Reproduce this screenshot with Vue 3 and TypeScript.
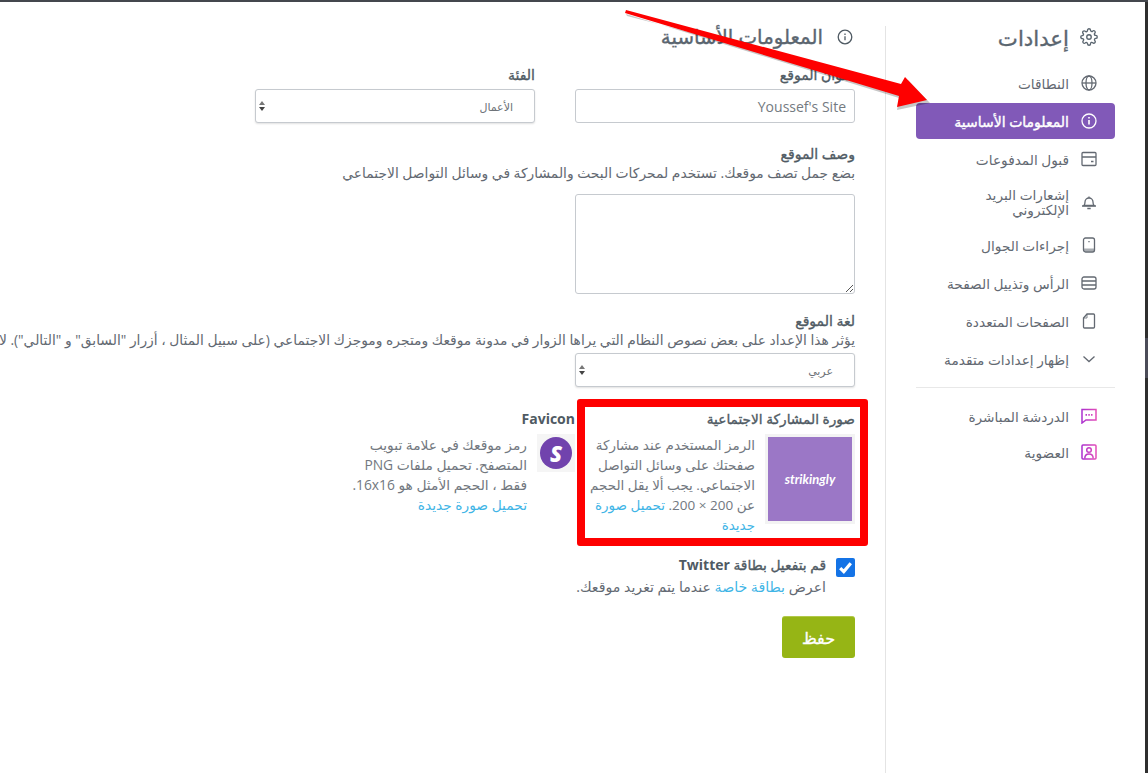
<script setup lang="ts">
interface NavItem { label: string; icon: string; active?: boolean; tall?: boolean }
const items: NavItem[] = [
  { label: 'النطاقات', icon: 'globe' },
  { label: 'المعلومات الأساسية', icon: 'info', active: true },
  { label: 'قبول المدفوعات', icon: 'card' },
  { label: 'إشعارات البريد الإلكتروني', icon: 'bell', tall: true },
  { label: 'إجراءات الجوال', icon: 'phone' },
  { label: 'الرأس وتذييل الصفحة', icon: 'rows' },
  { label: 'الصفحات المتعددة', icon: 'page' },
  { label: 'إظهار إعدادات متقدمة', icon: 'chev' },
]
const extras = [
  { label: 'الدردشة المباشرة', icon: 'chat' },
  { label: 'العضوية', icon: 'member' },
]
</script>

<template>
  <div class="page" dir="ltr">
    <main class="main" dir="rtl">
      <h2 class="title">
        <svg class="title-ico" viewBox="0 0 16 16" fill="none" stroke="currentColor" stroke-width="1.3"><circle cx="8" cy="8" r="6.8"/><path d="M8 7.2v4M8 4.4v1.5"/></svg>
        <span>المعلومات الأساسية</span>
      </h2>

      <div class="row-two">
        <div class="col">
          <label class="lbl">عنوان الموقع</label>
          <input class="input" dir="rtl" value="Youssef's Site" />
        </div>
        <div class="col">
          <label class="lbl">الفئة</label>
          <div class="select">
            <span class="sel-text">الأعمال</span>
            <span class="spin"><i class="up"></i><i class="down"></i></span>
          </div>
        </div>
      </div>

      <section class="field desc">
        <label class="lbl">وصف الموقع</label>
        <p class="hint">بضع جمل تصف موقعك. تستخدم لمحركات البحث والمشاركة في وسائل التواصل الاجتماعي</p>
        <div class="textarea"><svg class="grip" viewBox="0 0 10 10" stroke="#555" stroke-width="1"><path d="M2 9L9 2M6 9l3-3"/></svg></div>
      </section>

      <section class="field lang">
        <label class="lbl">لغة الموقع</label>
        <p class="hint nowrap">يؤثر هذا الإعداد على بعض نصوص النظام التي يراها الزوار في مدونة موقعك ومتجره وموجزك الاجتماعي (على سبيل المثال ، أزرار "السابق" و "التالي"). لا يؤثر</p>
        <div class="select lang-select">
          <span class="sel-text">عربي</span>
          <span class="spin"><i class="up"></i><i class="down"></i></span>
        </div>
      </section>

      <div class="row-images">
        <div class="social">
          <h4 class="img-title">صورة المشاركة الاجتماعية</h4>
          <div class="img-body">
            <div class="thumb"><div class="thumb-in">strikingly</div></div>
            <p class="img-text">الرمز المستخدم عند مشاركة صفحتك على وسائل التواصل الاجتماعي. يجب ألا يقل الحجم عن 200 × 200. <a class="link">تحميل صورة جديدة</a></p>
          </div>
        </div>
        <div class="favicon">
          <h4 class="img-title fav-title">Favicon</h4>
          <div class="img-body">
            <div class="fav-thumb"><div class="fav-dot">S</div></div>
            <p class="img-text fav-text">رمز موقعك في علامة تبويب المتصفح. تحميل ملفات PNG فقط ، الحجم الأمثل هو 16x16.<br /><a class="link">تحميل صورة جديدة</a></p>
          </div>
        </div>
      </div>

      <div class="twitter">
        <span class="check"><svg viewBox="0 0 18 18" fill="none" stroke="#fff" stroke-width="3"><path d="M4 9.500l3.400 3.400L14 5"/></svg></span>
        <div>
          <div class="tw-title">قم بتفعيل بطاقة <span class="tw-latin">Twitter</span></div>
          <div class="tw-text">اعرض <a class="link">بطاقة خاصة</a> عندما يتم تغريد موقعك.</div>
        </div>
      </div>

      <button class="save" type="button">حفظ</button>
    </main>

    <aside class="side" dir="rtl">
      <h1 class="side-title">
        <svg class="side-ico" viewBox="0 0 24 24" fill="none" stroke="currentColor" stroke-width="1.8" stroke-linejoin="round"><circle cx="12" cy="12" r="3"/><path d="M19.4 15a1.65 1.65 0 0 0 .33 1.82l.06.06a2 2 0 1 1-2.83 2.83l-.06-.06a1.65 1.65 0 0 0-2.82 1.17V21a2 2 0 1 1-4 0v-.09a1.65 1.65 0 0 0-2.82-1.12l-.06.06a2 2 0 1 1-2.83-2.83l.06-.06a1.65 1.65 0 0 0-1.17-2.82H3a2 2 0 1 1 0-4h.09a1.65 1.65 0 0 0 1.12-2.82l-.06-.06a2 2 0 1 1 2.83-2.83l.06.06a1.65 1.65 0 0 0 1.82.33H9a1.65 1.65 0 0 0 1-1.51V3a2 2 0 1 1 4 0v.09a1.65 1.65 0 0 0 2.82 1.12l.06-.06a2 2 0 1 1 2.83 2.83l-.06.06a1.65 1.65 0 0 0 1.17 2.82H21a2 2 0 1 1 0 4h-.09a1.65 1.65 0 0 0-1.51 1z"/></svg>
        <span>إعدادات</span>
      </h1>

      <nav class="nav nav-main">
        <a v-for="it in items" :key="it.label" class="nav-item" :class="{ active: it.active, tall: it.tall }">
          <svg class="nav-ico" viewBox="0 0 16 16" fill="none" stroke="currentColor" stroke-width="1.3">
            <template v-if="it.icon === 'globe'"><circle cx="8" cy="8" r="7"/><ellipse cx="8" cy="8" rx="3" ry="7"/><path d="M1 8h14"/></template>
            <template v-else-if="it.icon === 'info'"><circle cx="8" cy="8" r="7"/><path d="M8 7v4.400M8 3.900v1.600" stroke-width="1.600"/></template>
            <template v-else-if="it.icon === 'card'"><rect x="1" y="1.500" width="14" height="13" rx="1"/><path d="M1 6h14M10 10.500h2.500"/></template>
            <template v-else-if="it.icon === 'bell'"><path d="M3 11.500c.8-1 1-2 1-3.500a4 4 0 0 1 8 0c0 1.500.2 2.500 1 3.500z"/><path d="M1 12h14M6.300 14.500h3.400M8 2.500v1.500"/></template>
            <template v-else-if="it.icon === 'phone'"><rect x="2.500" y="1" width="11" height="14" rx="2"/><path d="M3 11.500h10v3H3z" fill="currentColor" stroke="none" opacity=".55"/><path d="M8 4v1.200"/></template>
            <template v-else-if="it.icon === 'rows'"><rect x="1" y="2" width="14" height="12" rx="2"/><path d="M1 6h14M1 10h14"/></template>
            <template v-else-if="it.icon === 'page'"><path d="M6 1h6.500a1 1 0 0 1 1 1v12a1 1 0 0 1-1 1h-9a1 1 0 0 1-1-1V5z"/><path d="M6 1v4H2.500" stroke-width=".8"/></template>
            <template v-else-if="it.icon === 'chev'"><path d="M2.500 5.500L8 10.500l5.500-5"/></template>
          </svg>
          <span class="nav-label">{{ it.label }}</span>
        </a>
      </nav>

      <div class="divider"></div>

      <nav class="nav">
        <a v-for="it in extras" :key="it.label" class="nav-item">
          <svg class="nav-ico" viewBox="0 0 16 16" fill="none" stroke="url(#pinkGrad)" stroke-width="1.500">
            <defs>
              <linearGradient id="pinkGrad" x1="0" x2="16" y1="0" y2="0" gradientUnits="userSpaceOnUse"><stop offset="0" stop-color="#a72fd0"/><stop offset="1" stop-color="#e64fb7"/></linearGradient>
            </defs>
            <template v-if="it.icon === 'chat'"><path d="M1 1.500h14v10.500H5l-4 3z"/><path d="M4.500 6.800h1.500M7.300 6.800h1.500M10 6.800h1.500" stroke-width="1.800"/></template>
            <template v-else><rect x="1" y="1" width="14" height="14" rx="1"/><circle cx="8" cy="6" r="2.300"/><path d="M3.800 14.500c0-3 1.800-4.500 4.200-4.500s4.200 1.500 4.200 4.500"/></template>
          </svg>
          <span class="nav-label">{{ it.label }}</span>
        </a>
      </nav>
    </aside>

    <div class="scrollbar"><div class="scroll-thumb"></div></div>
    <div class="redbox"></div>
    <svg class="arrow" viewBox="0 0 1148 773">
      <polygon points="626,14 899,98 897,110 930,103 908,80 903,87 627,16" fill="#000" opacity=".22"/>
      <polygon points="626,10 901,84 905,77 927,100 897,107 899,96 625,13" fill="#fe0000"/>
    </svg>
  </div>
</template>

<style>
html, body { margin: 0; background: #fff; }
</style>

<style scoped>
.page {
  position: relative;
  width: 1148px;
  height: 773px;
  box-sizing: border-box;
  overflow: hidden;
  display: flex;
  border-top: 2px solid #44474d;
  background: #fff;
  font-family: "Open Sans", "DejaVu Sans", sans-serif;
  color: #636972;
}
.main {
  width: 885px;
  flex: none;
  box-sizing: border-box;
  padding: 24px 30px 0 0;
  overflow: hidden;
}
.title {
  margin: 0 0 18px;
  padding: 0 2px;
  height: 22px;
  display: flex;
  align-items: center;
  gap: 14px;
  font-size: 19.800px;
  font-weight: 400;
  -webkit-text-stroke: .35px #5b6670;
  color: #5b6670;
  line-height: 22px;
}
.title-ico { width: 16px; height: 16px; color: #4f5a63; flex: none; }
.row-two { display: flex; gap: 40px; }
.col { width: 280px; }
.lbl {
  display: block;
  font-size: 14px;
  font-weight: 400;
  -webkit-text-stroke: .35px #4f5a63;
  line-height: 17px;
  color: #4f5a63;
  margin-bottom: 6px;
}
.input {
  display: block;
  width: 280px;
  height: 34px;
  box-sizing: border-box;
  border: 1px solid #c6cacf;
  border-radius: 3px;
  padding: 0 8px;
  font: 14px "Open Sans", sans-serif;
  color: #747a81;
  background: #fff;
  outline: none;
}
.select {
  position: relative;
  width: 280px;
  height: 34px;
  box-sizing: border-box;
  border: 1px solid #c6cacf;
  border-radius: 3px;
  box-shadow: 0 1px 2px rgba(0,0,0,.12);
  display: flex;
  align-items: center;
  justify-content: space-between;
  padding: 0 21px 0 3px;
  background: #fff;
}
.sel-text { font-size: 11px; color: #6d7278; }
.spin { display: flex; flex-direction: column; gap: 2px; }
.spin i { display: block; width: 0; height: 0; border-left: 3px solid transparent; border-right: 3px solid transparent; }
.spin .up { border-bottom: 4px solid #777; }
.spin .down { border-top: 4px solid #444; }
.field .lbl { margin-bottom: 2px; }
.desc { margin-top: 22px; }
.hint { margin: 0 0 13px; font-size: 13.850px; line-height: 17px; color: #636972; }
.nowrap { white-space: nowrap; }
.textarea {
  position: relative;
  width: 280px;
  height: 100px;
  box-sizing: border-box;
  border: 1px solid #c6cacf;
  border-radius: 3px;
}
.grip { position: absolute; right: 0; bottom: 0; width: 10px; height: 10px; }
.lang { margin-top: 18px; }
.lang .hint { margin-bottom: 5px; }
.row-images { display: flex; margin-top: 23px; }
.social { width: 280px; flex: none; }
.favicon { width: 225px; flex: none; }
.img-title {
  margin: 0 0 7px;
  font-size: 13.700px;
  line-height: 17px;
  font-weight: 400;
  -webkit-text-stroke: .35px #4f5a63;
  color: #4f5a63;
}
.fav-title { font-size: 14px; font-weight: 700; -webkit-text-stroke: 0; }
.img-body { display: flex; gap: 10px; }
.thumb { width: 90px; height: 90px; flex: none; box-sizing: border-box; padding: 3px; background: #f3f3f3; }
.thumb-in {
  width: 84px; height: 84px; background: #9b77c6; color: #fff;
  display: flex; align-items: center; justify-content: center;
  font: italic 700 13px "Lato", sans-serif; direction: ltr;
}
.img-text { margin: 0; width: 170px; padding-top: 1px; font-size: 13.500px; line-height: 20px; color: #727880; }
.link { color: #3fb5e6; }
.fav-thumb { width: 38px; height: 38px; flex: none; box-sizing: border-box; padding: 3px; background: #f5f5f5; }
.fav-dot {
  width: 32px; height: 32px; border-radius: 50%; background: #7143ad; color: #fff;
  display: flex; align-items: center; justify-content: center;
  font: italic 800 22px "Open Sans", sans-serif;
}
.fav-text { width: 178px; font-size: 13.800px; }
.twitter { display: flex; gap: 10px; margin-top: 21px; }
.check {
  width: 19px; height: 19px; flex: none; margin-top: 2px;
  background: #1473e6; border-radius: 2px; display: block;
}
.check svg { display: block; width: 19px; height: 19px; }
.tw-title { font-size: 13.800px; line-height: 18px; -webkit-text-stroke: .35px #4f5a63; color: #4f5a63; }
.tw-latin { font-size: 14px; font-weight: 700; -webkit-text-stroke: 0; }
.tw-text { font-size: 14.150px; line-height: 26px; color: #636972; }
.save {
  display: block;
  width: 73px;
  height: 42px;
  margin-top: 16px;
  border: 0;
  border-top: 1px solid #b2c94b;
  border-radius: 3px;
  background: #96b515;
  color: #fff;
  font: 400 16px "Open Sans", "DejaVu Sans", sans-serif;
  -webkit-text-stroke: .35px #fff;
}
.side {
  flex: 1;
  margin-top: 24px;
  border-left: 1px solid #e4e4e4;
  box-sizing: border-box;
  padding: 0 33px 0 30px;
}
.side-title {
  margin: 0 0 17px;
  display: flex;
  align-items: center;
  gap: 11px;
  padding: 0 17px;
  height: 22px;
  font-size: 21.300px;
  font-weight: 400;
  -webkit-text-stroke: .35px #5b6670;
  color: #5b6670;
}
.side-ico { width: 18px; height: 18px; flex: none; color: #5b6670; }
.nav { display: flex; flex-direction: column; }
.nav-main { gap: 2px; }
.nav-item {
  min-height: 36px;
  display: flex;
  align-items: center;
  gap: 12px;
  padding: 0 18px;
  border-radius: 4px;
  font-size: 13.700px;
  line-height: 15px;
  font-weight: 400;
  color: #636972;
  box-sizing: border-box;
}
.nav-item.tall { min-height: 46px; }
.nav-item.active { background: #8159b8; color: #fff; font-size: 14px; -webkit-text-stroke: .4px #fff; }
.nav-ico { width: 16px; height: 16px; flex: none; }
.nav-label { width: 130px; }
.divider { height: 1px; background: #e8e8e8; margin: 10px 0; }
.scrollbar { position: absolute; right: 0; top: 0; bottom: 0; width: 3px; background: #2f2f2f; }
.scroll-thumb { margin-top: 336px; height: 40px; background: #4b4c58; }
.redbox {
  position: absolute;
  left: 577px;
  top: 397px;
  width: 291px;
  height: 147px;
  box-sizing: border-box;
  border: 8px solid #fe0000;
  border-radius: 3px;
}
.arrow { position: absolute; left: 0; top: -2px; width: 1148px; height: 773px; pointer-events: none; }
</style>
